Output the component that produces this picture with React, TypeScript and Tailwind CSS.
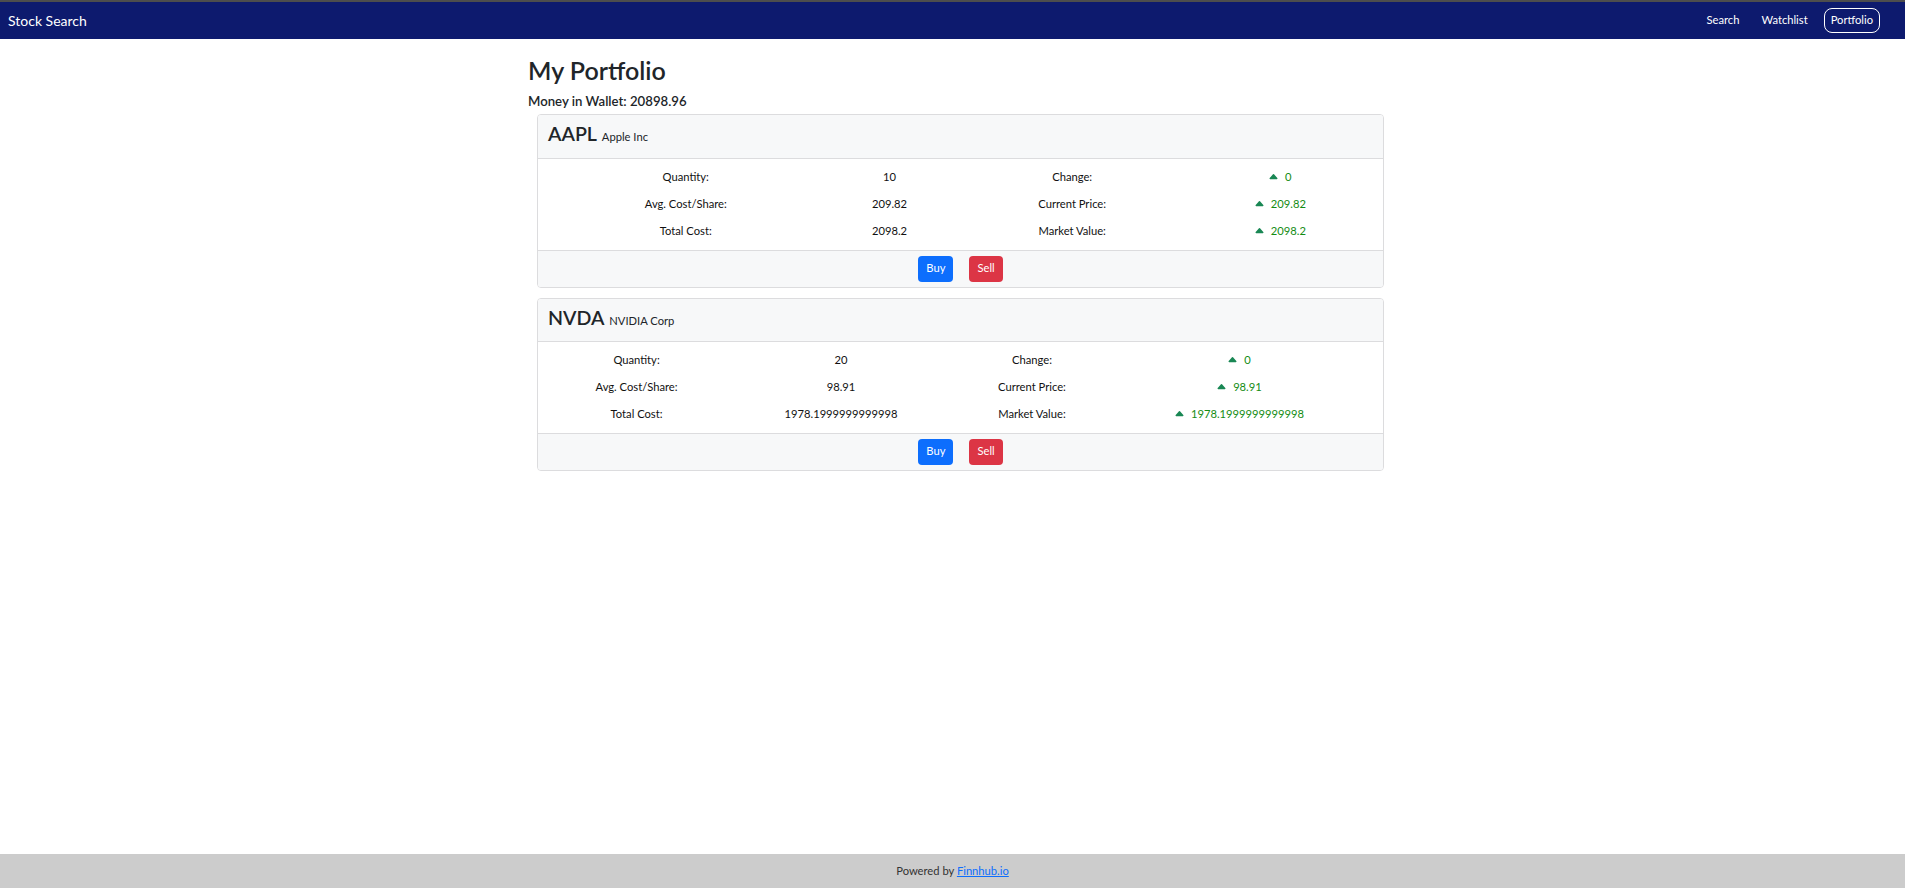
import React from "react";

type Holding = {
  symbol: string;
  name: string;
  quantity: string;
  avgCost: string;
  totalCost: string;
  change: string;
  currentPrice: string;
  marketValue: string;
};

const holdings: Holding[] = [
  {
    symbol: "AAPL",
    name: "Apple Inc",
    quantity: "10",
    avgCost: "209.82",
    totalCost: "2098.2",
    change: "0",
    currentPrice: "209.82",
    marketValue: "2098.2",
  },
  {
    symbol: "NVDA",
    name: "NVIDIA Corp",
    quantity: "20",
    avgCost: "98.91",
    totalCost: "1978.1999999999998",
    change: "0",
    currentPrice: "98.91",
    marketValue: "1978.1999999999998",
  },
];

// bootstrap "caret-up-fill"
function CaretUp() {
  return (
    <svg
      width="11"
      height="11"
      viewBox="0 0 16 16"
      fill="#198754"
      className="mr-[3px] inline-block align-[-1px]"
    >
      <path d="m7.247 4.86-4.796 5.481c-.566.647-.106 1.659.753 1.659h9.592a1 1 0 0 0 .753-1.659l-4.796-5.48a1 1 0 0 0-1.506 0z" />
    </svg>
  );
}

function Up({ value }: { value: string }) {
  return (
    <span className="text-[#138c13]">
      <CaretUp /> {value}
    </span>
  );
}

function HoldingCard({ h }: { h: Holding }) {
  return (
    <div className="mb-[10px] overflow-hidden rounded-[4px] border border-[#dcdcde] bg-white">
      {/* header */}
      <div className="border-b border-[#dcdcde] bg-[#f7f8f9] px-[10px] pb-[12px] pt-[7px]">
        <span className="text-[19.6px] font-semibold leading-[23.5px] text-[#212529]">
          {h.symbol}
        </span>{" "}
        <span className="ml-[2px] text-[11.2px] text-[#212529]">{h.name}</span>
      </div>

      {/* body */}
      <div className="px-[11px] py-[5px]">
        <table className="w-full text-center text-[11.2px] leading-[16.8px] text-[#111]">
          <tbody>
            <tr>
              <td className="px-[5px] py-[5px]">Quantity:</td>
              <td className="px-[5px] py-[5px]">{h.quantity}</td>
              <td className="px-[5px] py-[5px]">Change:</td>
              <td className="px-[5px] py-[5px]">
                <Up value={h.change} />
              </td>
            </tr>
            <tr>
              <td className="px-[5px] py-[5px]">Avg. Cost/Share:</td>
              <td className="px-[5px] py-[5px]">{h.avgCost}</td>
              <td className="px-[5px] py-[5px]">Current Price:</td>
              <td className="px-[5px] py-[5px]">
                <Up value={h.currentPrice} />
              </td>
            </tr>
            <tr>
              <td className="px-[5px] py-[5px]">Total Cost:</td>
              <td className="px-[5px] py-[5px]">{h.totalCost}</td>
              <td className="px-[5px] py-[5px]">Market Value:</td>
              <td className="px-[5px] py-[5px]">
                <Up value={h.marketValue} />
              </td>
            </tr>
          </tbody>
        </table>
      </div>

      {/* footer */}
      <div className="flex justify-center gap-4 border-t border-[#dcdcde] bg-[#f7f8f9] py-[5px]">
        <button className="h-[26px] rounded-[4px] bg-[#0d6efd] px-[8px] text-[11.2px] text-white">
          Buy
        </button>
        <button className="h-[26px] rounded-[4px] bg-[#dc3545] px-[8px] text-[11.2px] text-white">
          Sell
        </button>
      </div>
    </div>
  );
}

export default function App() {
  return (
    <div className="flex min-h-screen flex-col bg-white font-['Lato','Fira_Sans',sans-serif] text-[11.2px] text-[#212529]">
      {/* Navbar */}
      <nav className="flex h-[39px] items-center justify-between border-t-2 border-[#4d4d4d] bg-[#0d1a6e] pl-[8px] pr-[25px] text-white">
        <span className="text-[14px]">Stock Search</span>
        <div className="flex items-center text-[11.2px]">
          <span>Search</span>
          <span className="ml-[22px]">Watchlist</span>
          <span className="ml-[16px] flex h-[25px] items-center rounded-[8px] border border-white px-[6px]">
            Portfolio
          </span>
        </div>
      </nav>

      {/* Main */}
      <main className="ml-[528px] w-[865px] pt-[15px]">
        <h1 className="mb-[5px] text-[25px] font-semibold leading-[33.6px]">My Portfolio</h1>
        <h5 className="mb-[5px] text-[13.2px] font-semibold leading-[16.8px]">
          Money in Wallet: 20898.96
        </h5>
        <div className="ml-[9px] mr-[9px]">
          {holdings.map((h) => (
            <HoldingCard key={h.symbol} h={h} />
          ))}
        </div>
      </main>

      {/* Footer */}
      <footer className="mt-auto flex h-[34px] items-center justify-center bg-[#cccccc] text-[11.2px] text-[#333]">
        <span>
          Powered by{" "}
          <a href="#" className="text-[#0d6efd] underline">
            Finnhub.io
          </a>
        </span>
      </footer>
    </div>
  );
}
